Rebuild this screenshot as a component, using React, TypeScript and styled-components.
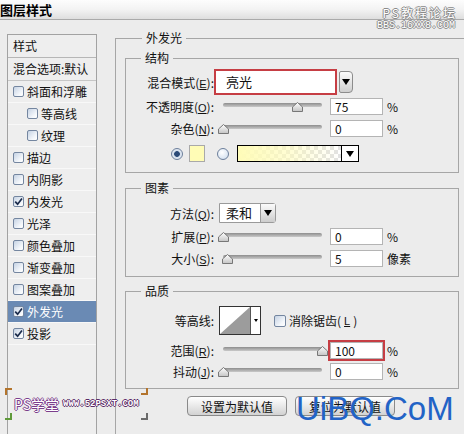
import styled, { createGlobalStyle } from 'styled-components';

const GlobalStyle = createGlobalStyle`
  html, body { margin: 0; padding: 0; background: #ececec; }
  body {
    font-family: 'Noto Sans CJK SC', 'Liberation Sans', sans-serif;
    font-size: 12px;
    color: #111;
  }
`;

const effects = [
    { name: '斜面和浮雕' },
    { name: '等高线', sub: true },
    { name: '纹理', sub: true },
    { name: '描边' },
    { name: '内阴影' },
    { name: '内发光', checked: true },
    { name: '光泽' },
    { name: '颜色叠加' },
    { name: '渐变叠加' },
    { name: '图案叠加' },
    { name: '外发光', checked: true, active: true },
    { name: '投影', checked: true },
];

const Check = ({ checked }: { checked?: boolean }) => (
    <CheckBox>
        {checked && (
            <svg width="9" height="9" viewBox="0 0 9 9">
                <path d="M1.2 4.6 L3.6 7.2 L8 1.4" fill="none" stroke="#1b2c4c" strokeWidth="1.7" />
            </svg>
        )}
    </CheckBox>
);

const Slider = ({ value }: { value: number }) => (
    <SliderBox>
        <Track />
        <Thumb style={{ left: `${value * 0.99 - 5.5}px` }} width="11" height="10" viewBox="0 0 11 10">
            <defs>
                <linearGradient id="tg" x1="0" y1="0" x2="0" y2="1">
                    <stop offset="0" stopColor="#ffffff" />
                    <stop offset="1" stopColor="#c4c4c4" />
                </linearGradient>
            </defs>
            <path d="M5.5 0.5 L10.5 5 L10.5 9.5 L0.5 9.5 L0.5 5 Z" fill="url(#tg)" stroke="#777" />
        </Thumb>
    </SliderBox>
);

const SliderRow = ({ label, k, value, text, unit, hi, mt }: {
    label: string; k: string; value: number; text: string; unit: string; hi?: boolean; mt: number;
}) => (
    <Row $h={17} $mt={mt}>
        <Label>{label}(<Key>{k}</Key>):</Label>
        <Slider value={value} />
        <NumInput $hi={hi}>{text}</NumInput>
        <Unit>{unit}</Unit>
    </Row>
);

const App = () => {
    return (
        <Root>
            <GlobalStyle />
            <TitleBar>图层样式</TitleBar>
            <TopMark>
                <div className="l1">PS教程论坛</div>
                <div className="l2">BBS.16XX8.COM</div>
            </TopMark>
            <Main>
                <StylesPanel>
                    <PanelHead>样式</PanelHead>
                    <PanelHead $light>混合选项:默认</PanelHead>
                    {effects.map((e) => (
                        <ListItem key={e.name} $sub={e.sub} $active={e.active}>
                            <Check checked={e.checked} />
                            {e.name}
                        </ListItem>
                    ))}
                </StylesPanel>
                <Outer>
                    <OuterLegend>外发光</OuterLegend>
                    <Group $pt={3} $pb={10}>
                        <GroupLegend>结构</GroupLegend>
                        <Row $h={26} $mt={0}>
                            <Label>混合模式(<Key>E</Key>):</Label>
                            <ModeField>亮光</ModeField>
                            <DropBtn><Tri /></DropBtn>
                        </Row>
                        <SliderRow label="不透明度" k="O" value={75} text="75" unit="%" mt={3} />
                        <SliderRow label="杂色" k="N" value={0} text="0" unit="%" mt={5} />
                        <ColorRow>
                            <Radio $on />
                            <Swatch />
                            <Radio />
                            <GradBox />
                            <GradArrow><Tri /></GradArrow>
                        </ColorRow>
                    </Group>
                    <Group $pt={7} $pb={9} $mt={7}>
                        <GroupLegend>图素</GroupLegend>
                        <Row $h={20} $mt={0}>
                            <Label>方法(<Key>Q</Key>):</Label>
                            <MethodSelect>
                                <span className="val">柔和</span>
                                <span className="btn"><Tri /></span>
                            </MethodSelect>
                        </Row>
                        <SliderRow label="扩展" k="P" value={0} text="0" unit="%" mt={5} />
                        <SliderRow label="大小" k="S" value={5} text="5" unit="像素" mt={5} />
                    </Group>
                    <Group $pt={7} $pb={8} $mt={6}>
                        <GroupLegend>品质</GroupLegend>
                        <Row $h={29} $mt={0}>
                            <Label>等高线:</Label>
                            <Contour>
                                <svg width="30" height="27" viewBox="0 0 30 27">
                                    <rect width="30" height="27" fill="#fff" />
                                    <polygon points="0,27 30,0 30,27" fill="#9c9c9c" />
                                </svg>
                                <span className="btn"><SmallTri /></span>
                            </Contour>
                            <AntiAlias>
                                <Check />
                                消除锯齿(<Key>L</Key>)
                            </AntiAlias>
                        </Row>
                        <SliderRow label="范围" k="R" value={100} text="100" unit="%" hi mt={7} />
                        <SliderRow label="抖动" k="J" value={0} text="0" unit="%" mt={4} />
                    </Group>
                    <Buttons>
                        <Button>设置为默认值</Button>
                        <Button>复位为默认值</Button>
                    </Buttons>
                </Outer>
            </Main>
            <BigMark>UiBQ.CoM</BigMark>
            <BottomMark>
                <Corners>
                    <Corner $c="#b3742c" />
                    <Corner $c="#5f9a3a" $flip />
                </Corners>
                <span className="ps">PS学堂</span>
                <span className="url">WWW.52PSXT.COM</span>
                <Corners>
                    <Corner $c="#b3742c" $flip />
                    <Corner $c="#6a6a6a" $flip />
                </Corners>
            </BottomMark>
        </Root>
    );
};

const Root = styled.div`
    position: relative;
    width: 464px;
    height: 434px;
    overflow: hidden;
    display: flex;
    flex-direction: column;
    background: #ececec;
`;

const TitleBar = styled.div`
    height: 19px;
    flex: none;
    border-bottom: 1px solid #aaaaaa;
    background: linear-gradient(#fdfdfd, #f3f3f3 50%, #dedede);
    font-size: 13px;
    font-weight: 700;
    line-height: 19px;
    color: #000;
`;

const TopMark = styled.div`
    position: absolute;
    top: 6px;
    right: 9px;
    text-align: right;
    color: #fff;
    text-shadow: 1px 0 #8a8a8a, -1px 0 #8a8a8a, 0 1px #8a8a8a, 0 -1px #8a8a8a;
    .l1 {
        font-size: 12px;
        line-height: 14px;
        letter-spacing: 2px;
        margin-right: -2px;
    }
    .l2 {
        margin-top: 1px;
        font-family: 'Liberation Mono', monospace;
        font-size: 10px;
        line-height: 9px;
    }
`;

const Main = styled.div`
    flex: 1;
    min-height: 0;
    display: flex;
`;

const StylesPanel = styled.div`
    flex: none;
    width: 90px;
    margin: 14px 0 0 7px;
    box-sizing: border-box;
    border: 1px solid #a2a2a2;
    border-bottom: none;
    background: #eeeeee;
`;

const PanelHead = styled.div<{ $light?: boolean }>`
    height: 23px;
    box-sizing: border-box;
    padding-left: 5px;
    line-height: 22px;
    border-bottom: 1px solid ${(p) => (p.$light ? '#c6c6c6' : '#b6b6b6')};
    white-space: nowrap;
`;

const ListItem = styled.div<{ $sub?: boolean; $active?: boolean }>`
    height: 22px;
    box-sizing: border-box;
    display: flex;
    align-items: center;
    gap: 3px;
    padding-left: ${(p) => (p.$sub ? 19 : 5)}px;
    border-bottom: 1px solid #f8f8f8;
    background: ${(p) => (p.$active ? '#6a8ab4' : 'transparent')};
    color: ${(p) => (p.$active ? '#fff' : '#111')};
    white-space: nowrap;
`;

const CheckBox = styled.span`
    width: 11px;
    height: 11px;
    flex: none;
    box-sizing: border-box;
    border: 1px solid #7486a0;
    border-radius: 2px;
    background: linear-gradient(135deg, #c6d3e4, #f4f7fb 70%, #fff);
    display: flex;
    align-items: center;
    justify-content: center;
`;

const Outer = styled.fieldset`
    flex: none;
    width: 372px;
    min-height: 430px;
    margin: 10px 0 0 18px;
    padding: 4px 0 0 9px;
    box-sizing: border-box;
    border: 1px solid #a6a6a6;
`;

const OuterLegend = styled.legend`
    margin-left: 17px;
    padding: 0 4px;
    font-size: 12px;
    line-height: 16px;
`;

const Group = styled.fieldset<{ $pt: number; $pb: number; $mt?: number }>`
    width: 334px;
    box-sizing: border-box;
    margin: ${(p) => p.$mt ?? 0}px 0 0 0;
    padding: ${(p) => p.$pt}px 0 ${(p) => p.$pb}px 0;
    border: 1px solid #a6a6a6;
    display: flex;
    flex-direction: column;
`;

const GroupLegend = styled.legend`
    margin-left: 15px;
    padding: 0 4px;
    font-size: 12px;
    line-height: 16px;
`;

const Row = styled.div<{ $h: number; $mt: number }>`
    height: ${(p) => p.$h}px;
    margin-top: ${(p) => p.$mt}px;
    display: flex;
    align-items: center;
`;

const Label = styled.span`
    width: 88px;
    flex: none;
    text-align: right;
    white-space: nowrap;
`;

const Key = styled.u`
    font-family: 'Liberation Sans', sans-serif;
    font-size: 11px;
`;

const ModeField = styled.div`
    width: 123px;
    height: 26px;
    box-sizing: border-box;
    border: 2px solid #c63e44;
    background: #fff;
    padding-left: 10px;
    line-height: 22px;
    font-size: 13px;
`;

const DropBtn = styled.div`
    width: 14px;
    height: 22px;
    margin-left: 2px;
    box-sizing: border-box;
    border: 1px solid #8c8c8c;
    border-radius: 2px 4px 4px 2px;
    background: linear-gradient(#fbfbfb, #cfcfcf);
    display: flex;
    align-items: center;
    justify-content: center;
`;

const Tri = styled.span`
    width: 0;
    height: 0;
    border-left: 4px solid transparent;
    border-right: 4px solid transparent;
    border-top: 6px solid #000;
`;

const SmallTri = styled.span`
    width: 0;
    height: 0;
    border-left: 2.5px solid transparent;
    border-right: 2.5px solid transparent;
    border-top: 3px solid #000;
`;

const SliderBox = styled.div`
    position: relative;
    width: 99px;
    height: 17px;
    margin-left: 9px;
    box-sizing: border-box;
    padding-top: 5px;
    flex: none;
`;

const Track = styled.div`
    height: 4px;
    border-radius: 2px;
    background: linear-gradient(#8d8d8d, #c9c9c9);
`;

const Thumb = styled.svg`
    position: absolute;
    top: 4px;
`;

const NumInput = styled.div<{ $hi?: boolean }>`
    width: 53px;
    height: 17px;
    margin-left: 8px;
    box-sizing: border-box;
    border: 1px solid #b4b4b4;
    background: #fff;
    padding-left: 4px;
    line-height: 15px;
    font-size: 12px;
    flex: none;
    box-shadow: ${(p) => (p.$hi ? '0 0 0 2px #c63e44' : 'none')};
`;

const Unit = styled.span`
    margin-left: 4px;
    white-space: nowrap;
`;

const ColorRow = styled.div`
    height: 17px;
    margin-top: 8px;
    padding-left: 45px;
    display: flex;
    align-items: center;
`;

const Radio = styled.span<{ $on?: boolean }>`
    width: 12px;
    height: 12px;
    box-sizing: border-box;
    border-radius: 50%;
    border: 1px solid #6c7f9b;
    flex: none;
    margin-left: ${(p) => (p.$on ? 0 : 12)}px;
    background: ${(p) =>
        p.$on
            ? 'radial-gradient(circle, #2b4a78 0 2.5px, #d3deec 3.2px, #f6f9fc)'
            : 'radial-gradient(circle at 40% 35%, #ffffff, #cbdaec)'};
`;

const Swatch = styled.span`
    width: 16px;
    height: 17px;
    margin-left: 6px;
    box-sizing: border-box;
    border: 1px solid #a9a9a9;
    background: #fffcb6;
`;

const GradBox = styled.span`
    width: 105px;
    height: 17px;
    margin-left: 8px;
    box-sizing: border-box;
    border: 1px solid #000;
    background: linear-gradient(to right, #fffcb8 0%, rgba(255, 252, 184, 0.6) 50%, rgba(255, 252, 184, 0) 100%),
        repeating-conic-gradient(#e2e2e2 0 25%, #ffffff 0 50%) 0 0 / 8px 8px;
`;

const GradArrow = styled.span`
    width: 17px;
    height: 17px;
    box-sizing: border-box;
    border: 1px solid #000;
    border-left: none;
    background: #fff;
    display: flex;
    align-items: center;
    justify-content: center;
`;

const MethodSelect = styled.div`
    width: 57px;
    height: 20px;
    margin-left: 5px;
    box-sizing: border-box;
    border: 1px solid #9a9a9a;
    border-radius: 0 3px 3px 0;
    background: #fff;
    display: flex;
    .val {
        flex: 1;
        padding-left: 6px;
        line-height: 18px;
        font-size: 13px;
    }
    .btn {
        width: 14px;
        border-left: 1px solid #9a9a9a;
        background: linear-gradient(#fbfbfb, #cdcdcd);
        display: flex;
        align-items: center;
        justify-content: center;
    }
`;

const Contour = styled.div`
    width: 42px;
    height: 29px;
    margin-left: 5px;
    box-sizing: border-box;
    border: 1px solid #333;
    background: #fff;
    display: flex;
    .btn {
        flex: 1;
        border-left: 1px solid #555;
        display: flex;
        justify-content: center;
        padding-top: 12px;
    }
`;

const AntiAlias = styled.label`
    margin-left: 13px;
    display: flex;
    align-items: center;
    gap: 3px;
    white-space: nowrap;
    span:first-child {
        width: 12px;
        height: 12px;
    }
`;

const Buttons = styled.div`
    margin: 7px 0 0 62px;
    display: flex;
    gap: 8px;
`;

const Button = styled.button`
    width: 100px;
    height: 20px;
    padding: 0;
    box-sizing: border-box;
    border: 1px solid #8a8a8a;
    border-radius: 4px;
    background: linear-gradient(#ffffff, #e9e9e9 50%, #d2d2d2);
    font-family: 'Noto Sans CJK SC', sans-serif;
    font-size: 12px;
    color: #111;
`;

const BigMark = styled.div`
    position: absolute;
    left: 296px;
    top: 392px;
    font-family: 'Liberation Sans', Arial, sans-serif;
    font-size: 33px;
    line-height: 33px;
    color: #2263c6;
    white-space: nowrap;
`;

const BottomMark = styled.div`
    position: absolute;
    left: 5px;
    top: 388px;
    display: flex;
    align-items: center;
    gap: 2px;
    .ps {
        font-size: 14px;
        line-height: 18px;
        color: #fff;
        text-shadow: 1px 0 #7b3e8c, -1px 0 #7b3e8c, 0 1px #7b3e8c, 0 -1px #7b3e8c;
    }
    .url {
        margin-left: 2px;
        font-family: 'Liberation Mono', monospace;
        font-size: 9px;
        font-weight: 700;
        color: #fff;
        text-shadow: 1px 0 #5b2a66, -1px 0 #5b2a66, 0 1px #5b2a66, 0 -1px #5b2a66;
    }
`;

const Corners = styled.div`
    height: 32px;
    display: flex;
    flex-direction: column;
    justify-content: space-between;
`;

const Corner = styled.span<{ $c: string; $flip?: boolean }>`
    width: 5px;
    height: 5px;
    border: 2px solid ${(p) => p.$c};
    border-${(p) => (p.$flip ? 'top' : 'bottom')}: none;
    border-${(p) => (p.$flip ? 'left' : 'right')}: none;
`;

export default App;
